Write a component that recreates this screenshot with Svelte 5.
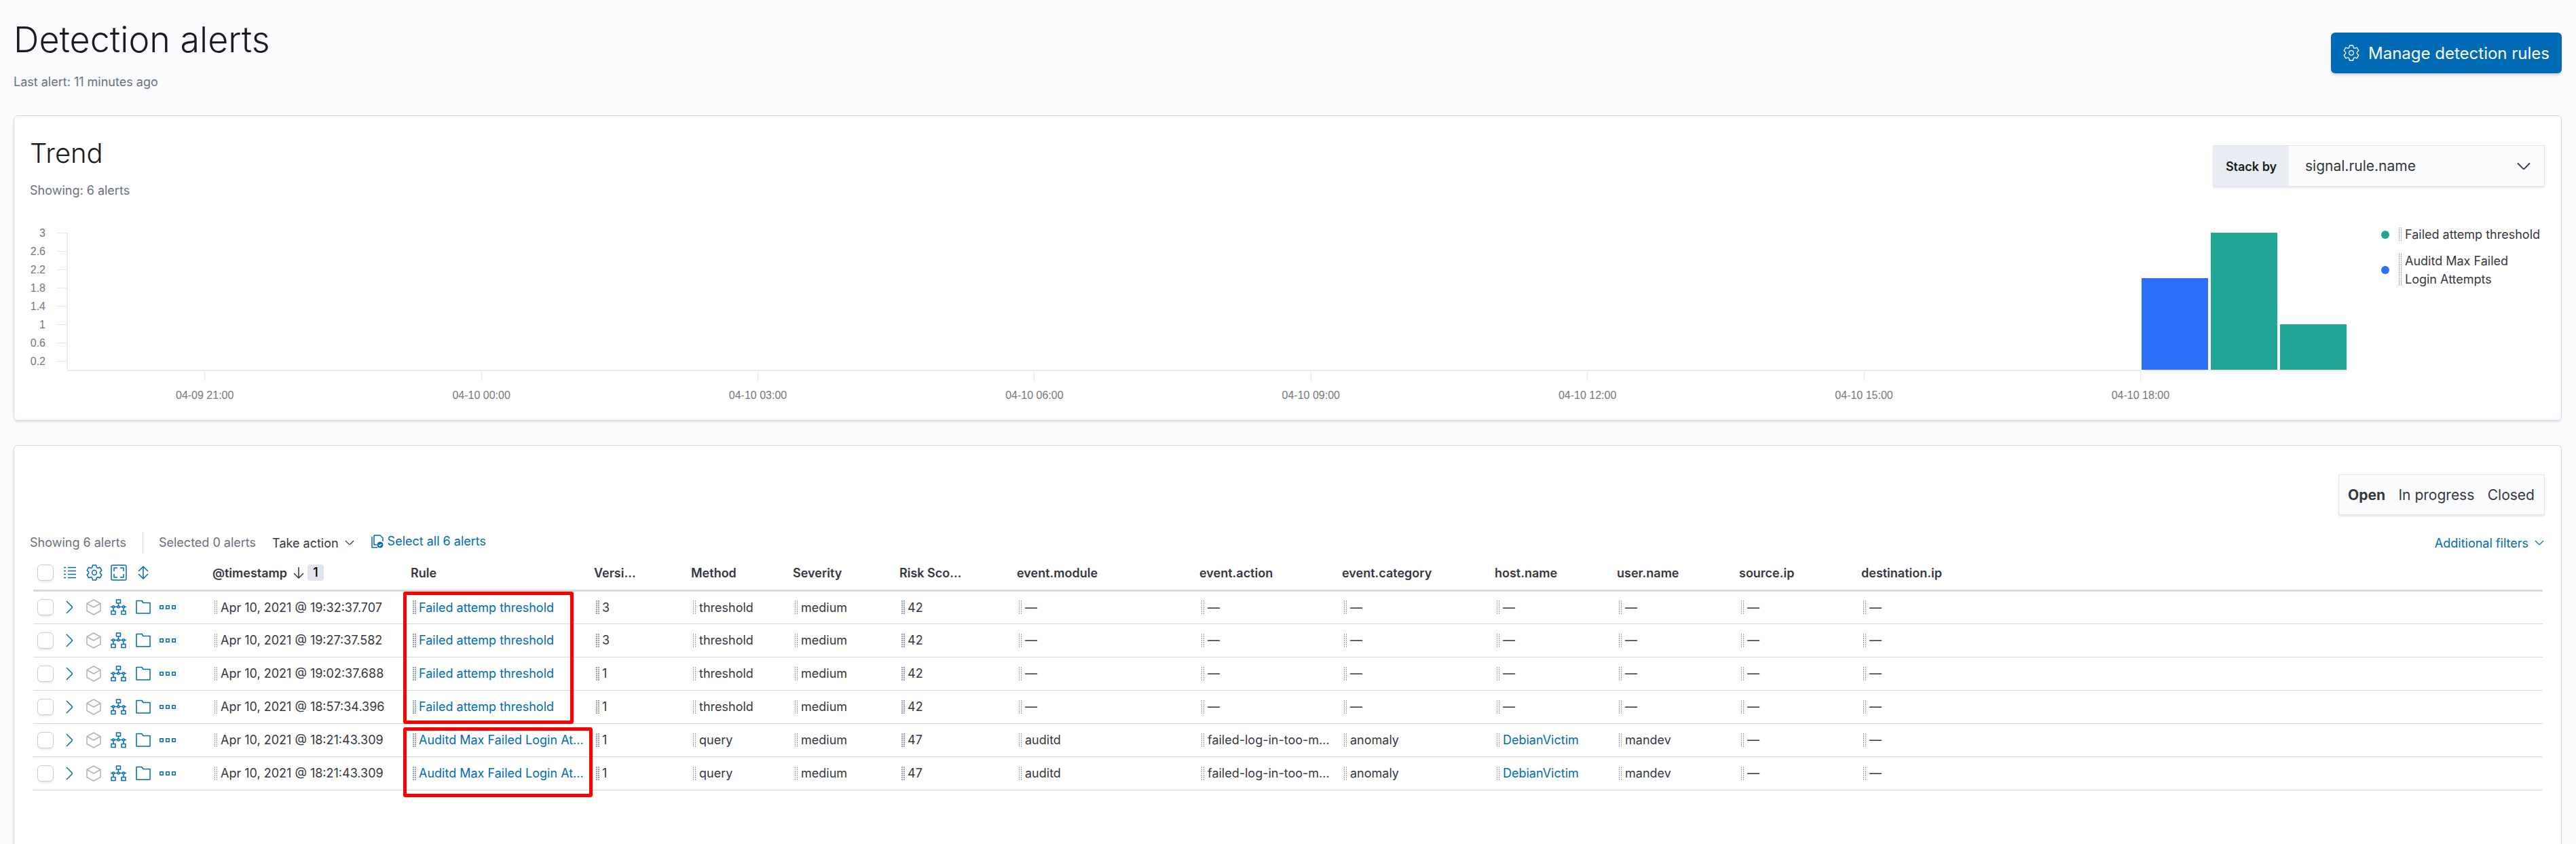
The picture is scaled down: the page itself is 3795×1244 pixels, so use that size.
<script>
  const columns = [
    { label: '@timestamp', width: 292, sorted: true },
    { label: 'Rule', width: 270, bold: true },
    { label: 'Versi...', width: 143, bold: true },
    { label: 'Method', width: 150 },
    { label: 'Severity', width: 157 },
    { label: 'Risk Sco...', width: 173, bold: true },
    { label: 'event.module', width: 269 },
    { label: 'event.action', width: 210 },
    { label: 'event.category', width: 225 },
    { label: 'host.name', width: 180 },
    { label: 'user.name', width: 180 },
    { label: 'source.ip', width: 180 },
    { label: 'destination.ip', width: 180 }
  ];

  const failed = (time, version) => [
    `Apr 10, 2021 @ ${time}`, 'Failed attemp threshold', version, 'threshold', 'medium', '42',
    '—', '—', '—', '—', '—', '—', '—'
  ];
  const audit = (time) => [
    `Apr 10, 2021 @ ${time}`, 'Auditd Max Failed Login At...', '1', 'query', 'medium', '47',
    'auditd', 'failed-log-in-too-m...', 'anomaly', 'DebianVictim', 'mandev', '—', '—'
  ];
  const rows = [
    failed('19:32:37.707', '3'),
    failed('19:27:37.582', '3'),
    failed('19:02:37.688', '1'),
    failed('18:57:34.396', '1'),
    audit('18:21:43.309'),
    audit('18:21:43.309')
  ];

  const isLink = (index, value) => index === 1 || (index === 9 && value !== '—');

  // Chart scale: three units over the plot height.
  const yTicks = ['3', '2.6', '2.2', '1.8', '1.4', '1', '0.6', '0.2'];
  const xTicks = ['04-09 21:00', '04-10 00:00', '04-10 03:00', '04-10 06:00', '04-10 09:00', '04-10 12:00', '04-10 15:00', '04-10 18:00'];
  const bars = [
    { value: 2, kind: 'audit' },
    { value: 3, kind: 'failed' },
    { value: 1, kind: 'failed' }
  ];
</script>

{#snippet gear()}
  <svg class="icon" viewBox="0 0 24 24" aria-hidden="true">
    <path d="M9.500 1H14.500L15.200 4Q15.800 5.300 17.200 5.200L20.200 4.200L22.800 8.600L20.600 10.700Q19.800 12 20.600 13.300L22.800 15.400L20.200 19.800L17.200 18.800Q15.800 18.700 15.200 20L14.500 23H9.500L8.800 20Q8.200 18.700 6.800 18.800L3.800 19.800L1.200 15.400L3.400 13.300Q4.200 12 3.400 10.700L1.200 8.600L3.800 4.200L6.800 5.200Q8.200 5.300 8.800 4Z" />
    <circle cx="12" cy="12" r="3.4" />
  </svg>
{/snippet}

{#snippet chevron()}
  <svg class="chevron" viewBox="0 0 16 16" aria-hidden="true"><path d="M2 5l5.4 5.4q.6.6 1.2 0L14 5" /></svg>
{/snippet}

<main>
  <header class="page-head">
    <div>
      <h1>Detection alerts</h1>
      <p class="sub">Last alert: 11 minutes ago</p>
    </div>
    <button class="primary" type="button">{@render gear()}<span>Manage detection rules</span></button>
  </header>

  <section class="panel trend">
    <div class="trend-head">
      <div>
        <h2>Trend</h2>
        <p class="sub">Showing: 6 alerts</p>
      </div>
      <div class="stack">
        <label for="stack-by">Stack by</label>
        <div class="select-wrap">
          <select id="stack-by"><option>signal.rule.name</option></select>
          {@render chevron()}
        </div>
      </div>
    </div>

    <div class="chart">
      <div class="y-axis">
        {#each yTicks as tick}
          <div class="y-tick"><span>{tick}</span><i></i></div>
        {/each}
      </div>
      <div class="plot-col">
        <div class="plot">
          <div class="bars">
            {#each bars as bar}
              <div class="bar {bar.kind}" style="height: {(bar.value / 3) * 100}%"></div>
            {/each}
          </div>
        </div>
        <div class="x-axis">
          {#each xTicks as tick}
            <div class="x-tick"><i></i><span>{tick}</span></div>
          {/each}
        </div>
      </div>
      <ul class="legend">
        <li><b class="dot failed"></b><i class="grip"></i><span>Failed attemp threshold</span></li>
        <li><b class="dot audit"></b><i class="grip"></i><span>Auditd Max Failed Login Attempts</span></li>
      </ul>
    </div>
  </section>

  <section class="panel alerts">
    <div class="filters">
      <button type="button" class="on">Open</button>
      <button type="button">In progress</button>
      <button type="button">Closed</button>
    </div>

    <div class="toolbar">
      <span class="count">Showing 6 alerts</span>
      <span class="count selected">Selected 0 alerts</span>
      <button type="button" class="take">Take action {@render chevron()}</button>
      <button type="button" class="link select-all">
        <svg class="pages" viewBox="0 0 18 20" aria-hidden="true">
          <path d="M4 1h9l4 4v5M4 1v14h4M1 3v16h8" />
          <circle cx="13" cy="15" r="4.5" class="solid" />
          <path d="M11 15l1.5 1.5L15 14" class="tick" />
        </svg>
        Select all 6 alerts
      </button>
      <button type="button" class="link more">Additional filters {@render chevron()}</button>
    </div>

    <div class="table-wrap">
      <table>
        <colgroup>
          <col class="c-actions" />
          {#each columns as column}<col style="width: {column.width}px" />{/each}
          <col />
        </colgroup>
        <thead>
          <tr>
            <th>
              <div class="actions">
                <input type="checkbox" aria-label="Select all rows" />
                <button type="button" aria-label="Fields">
                  <svg class="icon" viewBox="0 0 24 24" aria-hidden="true"><path d="M3 4.500h3M9 4.500h12M3 9.500h3M9 9.500h12M3 14.500h3M9 14.500h12M3 19.500h3M9 19.500h12" /></svg>
                </button>
                <button type="button" aria-label="Settings">{@render gear()}</button>
                <button type="button" aria-label="Full screen">
                  <svg class="icon" viewBox="0 0 24 24" aria-hidden="true"><rect x="1" y="1" width="22" height="22" rx="2" /><path d="M5 10V5h5M14 5h5v5M19 14v5h-5M10 19H5v-5" /></svg>
                </button>
                <button type="button" aria-label="Sort">
                  <svg class="icon" viewBox="0 0 24 24" aria-hidden="true"><path d="M12 3v18M5 10l7-7 7 7M5 14l7 7 7-7" /></svg>
                </button>
              </div>
            </th>
            {#each columns as column}
              <th scope="col">
                <div class="head">
                  {column.label}
                  {#if column.sorted}
                    <svg class="sort" viewBox="0 0 18 20" aria-hidden="true"><path d="M9 2v16M2 11l7 7 7-7" /></svg>
                    <span class="badge">1</span>
                  {/if}
                </div>
              </th>
            {/each}
            <th></th>
          </tr>
        </thead>
        <tbody>
          {#each rows as row, r}
            <tr>
              <td>
                <div class="actions">
                  <input type="checkbox" aria-label="Select row {r + 1}" />
                  <button type="button" aria-label="Expand">
                    <svg class="icon" viewBox="0 0 24 24" aria-hidden="true"><path d="M7 3l8 8q1 1 0 2l-8 8" /></svg>
                  </button>
                  <button type="button" class="muted" aria-label="Package">
                    <svg class="icon" viewBox="0 0 24 24" aria-hidden="true"><path d="M11 1L21 6.500V17.500L11 23L1 17.500V6.500ZM1 6.500L11 12L21 6.500" /></svg>
                  </button>
                  <button type="button" aria-label="Analyze event">
                    <svg class="icon" viewBox="0 0 24 24" aria-hidden="true"><path d="M8.500 1h6v5h-6zM1 17.500h6v5H1zM16 17.500h6v5h-6zM11.500 6v4M4 17.500v-4M19 17.500v-4M0 11.500h3M5 11.500h5M13 11.500h5M20 11.500h3" /><circle cx="4" cy="11.500" r="1.500" /><circle cx="11.500" cy="11.500" r="1.500" /><circle cx="19" cy="11.500" r="1.500" /></svg>
                  </button>
                  <button type="button" aria-label="Add to case">
                    <svg class="icon" viewBox="0 0 24 24" aria-hidden="true"><path d="M2 21V2.500h8l2 3h10V21z" /></svg>
                  </button>
                  <button type="button" aria-label="More actions">
                    <svg class="icon" viewBox="0 0 24 24" aria-hidden="true"><path d="M.75 9.750h4.500v4.500H.75zM9.750 9.750h4.500v4.500h-4.500zM18.750 9.750h4.500v4.500h-4.500z" /></svg>
                  </button>
                </div>
              </td>
              {#each row as value, i}
                <td>
                  <div class="cell">
                    <i class="grip" class:heavy={columns[i].bold}></i>
                    {#if isLink(i, value)}<a href="#alert">{value}</a>{:else}<span>{value}</span>{/if}
                  </div>
                </td>
              {/each}
              <td></td>
            </tr>
          {/each}
        </tbody>
      </table>
      <div class="mark first"></div>
      <div class="mark second"></div>
    </div>
  </section>
</main>

<style>
  :global(body) {
    background: #fafbfd;
    color: #343741;
    font-family: Inter, 'Liberation Sans', sans-serif;
    font-size: 18px;
    line-height: 27px;
  }
  main {
    box-sizing: border-box;
    min-height: 100vh;
    padding: 23px 21px 0 20px;
    display: flex;
    flex-direction: column;
  }
  h1, h2, p, ul { margin: 0; padding: 0; }
  h1, h2 { color: #1a1c21; font-weight: 300; }
  h1 { font-size: 52px; line-height: 72px; }
  h2 { font-size: 40px; line-height: 54px; }
  .sub { color: #69707d; }
  button {
    font: inherit;
    color: inherit;
    background: none;
    border: 0;
    padding: 0;
    white-space: nowrap;
  }
  svg { fill: none; stroke: currentColor; stroke-width: 2; stroke-linejoin: round; flex: none; }
  .icon { width: 24px; height: 24px; display: block; }
  .chevron { width: 16px; height: 16px; stroke-width: 1.3; }

  .page-head {
    display: flex;
    justify-content: space-between;
    align-items: flex-start;
    height: 147px;
  }
  .page-head .sub { margin-top: 12px; }
  .primary {
    display: flex;
    align-items: center;
    gap: 13px;
    height: 60px;
    margin-top: 25px;
    padding: 0 18px;
    border-radius: 6px;
    background: #006bb4;
    color: #fff;
    font-size: 24px;
    box-shadow: 0 3px 4px -1px rgba(54, 97, 126, 0.3);
  }
  .primary .icon, .primary :global(.icon) { stroke-width: 1.3; }

  .panel {
    background: #fff;
    border: 1px solid #d3dae6;
    border-radius: 6px;
    box-shadow: 0 3px 3px -1px rgba(152, 162, 179, 0.3);
  }
  .trend { height: 448px; margin-bottom: 36px; }
  .trend-head {
    display: flex;
    justify-content: space-between;
    align-items: flex-start;
    height: 159px;
    padding: 0 24px 0 23px;
    box-sizing: border-box;
  }
  .trend-head h2 { margin-top: 28px; }
  .trend-head .sub { margin-top: 14px; }
  .stack {
    display: flex;
    box-sizing: border-box;
    width: 489px;
    height: 61px;
    margin-top: 43px;
    border: 1px solid #e0e4ed;
    background: #fbfcfd;
    box-shadow: 0 3px 3px -1px rgba(152, 162, 179, 0.3);
  }
  .stack label {
    width: 111px;
    background: #e9edf3;
    color: #1a1c21;
    font-weight: 600;
    line-height: 61px;
    text-align: center;
  }
  .select-wrap { flex: 1; display: grid; align-items: center; }
  .select-wrap > * { grid-area: 1 / 1; }
  .select-wrap select {
    appearance: none;
    width: 100%;
    height: 100%;
    padding: 0 24px;
    border: 0;
    background: none;
    color: #343741;
    font: inherit;
    font-size: 21px;
  }
  .select-wrap :global(.chevron) {
    justify-self: end;
    width: 24px;
    height: 24px;
    margin-right: 18px;
    pointer-events: none;
  }

  .chart { display: flex; padding: 0 24px 0 23px; }
  .y-axis, .x-axis { color: #777; font-family: 'Liberation Sans', Arial, sans-serif; font-size: 16px; }
  .y-axis { width: 54px; }
  .y-tick {
    display: flex;
    justify-content: flex-end;
    align-items: center;
    gap: 16px;
    height: 27px;
  }
  .y-tick i { width: 15px; height: 1px; background: #e8e8e8; }
  .plot-col { flex: 1; padding-top: 13px; }
  .plot {
    height: 202px;
    border-left: 2px solid #ececec;
    border-bottom: 2px solid #ececec;
    display: flex;
    justify-content: flex-end;
  }
  .bars {
    display: flex;
    align-items: flex-end;
    gap: 4px;
    width: 9%;
    padding-right: 1px;
  }
  .bar { flex: 1; }
  .failed { background: #1ea593; }
  .audit { background: #2b70f7; }
  .x-axis { display: grid; grid-template-columns: repeat(8, 12.125%); }
  .x-tick { display: flex; flex-direction: column; align-items: center; gap: 7px; }
  .x-tick i { width: 1px; height: 15px; background: #e8e8e8; }
  .legend { width: 241px; margin-left: 50px; list-style: none; padding-top: 2px; }
  .legend li { display: flex; align-items: center; margin-bottom: 12px; padding-right: 4px; }
  .dot { width: 12px; height: 12px; border-radius: 50%; flex: none; }
  .legend .grip { height: auto; align-self: stretch; margin: 3px 5px 3px 14px; }
  .legend span { flex: 1; }

  .grip {
    width: 4px;
    height: 20px;
    flex: none;
    background-image:
      repeating-linear-gradient(to bottom, transparent 0 2px, #fff 2px 3px),
      linear-gradient(to right, #98a2b3 1px, transparent 1px 3px, #98a2b3 3px);
  }
  .heavy {
    width: 5px;
    margin-right: -1px;
    background-image:
      repeating-linear-gradient(to bottom, transparent 0 2px, #fff 2px 3px),
      linear-gradient(to right, #98a2b3 2px, transparent 2px 3px, #98a2b3 3px);
  }

  .alerts { flex: 1; border-bottom: 0; border-radius: 6px 6px 0 0; padding: 42px 24px 0 23px; }
  .filters {
    display: flex;
    justify-content: space-between;
    align-items: center;
    box-sizing: border-box;
    width: 304px;
    height: 60px;
    margin-left: auto;
    padding: 0 14px 0 13px;
    border: 1px solid #e0e4ed;
    background: #fbfcfd;
    box-shadow: 0 3px 3px -1px rgba(152, 162, 179, 0.3);
    font-size: 21px;
  }
  .filters .on { font-weight: 700; }
  .toolbar { display: flex; align-items: center; height: 30px; margin-top: 26px; }
  .count { color: #69707d; line-height: 30px; }
  .selected { margin-left: 24px; padding-left: 23px; border-left: 1px solid #d3dae6; }
  .take { display: flex; align-items: center; gap: 8px; margin-left: 24px; }
  .link, a { color: #006bb4; text-decoration: none; }
  .link { display: flex; align-items: center; }
  .select-all { gap: 6px; margin-left: 24px; align-self: flex-start; line-height: 26px; }
  .pages { width: 18px; height: 20px; stroke-width: 1.5; }
  .solid { fill: currentColor; stroke: none; }
  .tick { stroke: #fff; }
  .more { gap: 8px; margin-left: auto; }

  .table-wrap { position: relative; padding: 0 3px 0 5px; }
  table { width: 100%; table-layout: fixed; border-collapse: collapse; }
  th, td { padding: 0; text-align: left; }
  th { padding-top: 5px; }
  .c-actions { width: 264px; }
  thead tr { height: 55px; border-bottom: 3px solid #d3dae6; }
  tbody tr { height: 49px; border-bottom: 1px solid #d3dae6; }
  .actions { display: flex; align-items: center; gap: 12px; padding-left: 6px; }
  .actions button { color: #006bb4; }
  .actions .muted { color: #b2b4b8; }
  .actions input {
    appearance: none;
    width: 24px;
    height: 24px;
    margin: 0;
    border: 1px solid #c9cbcd;
    border-radius: 6px;
    background: #fff;
    box-shadow: 0 3px 3px -1px rgba(152, 162, 179, 0.25);
  }
  .actions .icon { stroke-width: 1.5; }
  .head { display: flex; align-items: center; font-weight: 600; white-space: nowrap; }
  .sort { width: 18px; height: 20px; margin: 0 4px 0 8px; stroke-width: 1.5; }
  .badge {
    width: 24px;
    border-radius: 4px;
    background: #e0e5ee;
    color: #000;
    line-height: 24px;
    text-align: center;
    font-weight: 500;
  }
  .cell { display: flex; align-items: center; gap: 5px; padding-left: 3px; white-space: nowrap; }

  .mark {
    position: absolute;
    box-sizing: border-box;
    left: 550px;
    border: 5px solid #f00;
    border-radius: 3px;
    pointer-events: none;
  }
  .first { top: 57px; width: 251px; height: 195px; }
  .second { top: 257px; width: 279px; height: 103px; }
</style>
